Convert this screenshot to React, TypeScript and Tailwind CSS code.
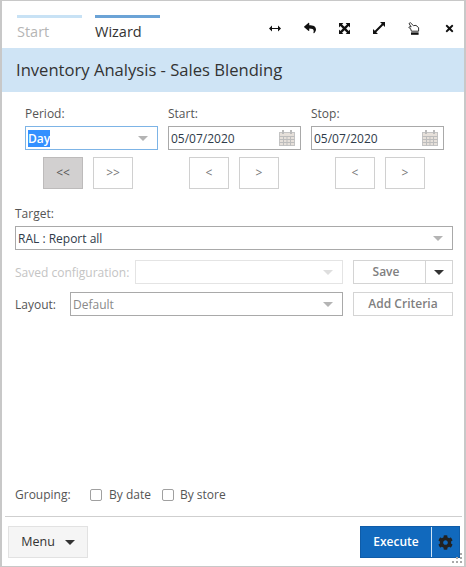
import { FaCog, FaReply, FaTimes } from 'react-icons/fa'

function Caret({ className = 'border-t-[#b4b4b4]' }: { className?: string }) {
  return <span className={`block h-0 w-0 border-x-[5px] border-t-[5px] border-x-transparent ${className}`} />
}

function Calendar() {
  return (
    <svg width="16" height="16" viewBox="0 0 16 16" className="shrink-0">
      <rect x="0.5" y="2.5" width="15" height="13" fill="#e6e0da" stroke="#c4c4c4" />
      <path d="M0.5 6.5H15.5M0.5 9.5H15.5M0.5 12.5H15.5M4.5 6.5V15.5M8 6.5V15.5M11.5 6.5V15.5" stroke="#bdbdbd" fill="none" />
      <rect x="3" y="0" width="2" height="4" fill="#bbb" />
      <rect x="11" y="0" width="2" height="4" fill="#bbb" />
    </svg>
  )
}

function WidthArrows() {
  return (
    <svg width="12" height="7" viewBox="0 0 12 7" fill="#111">
      <path d="M0 3.5 3 0.5V3H9V0.5L12 3.5 9 6.5V4H3V6.5Z" />
    </svg>
  )
}

function CrossArrows() {
  return (
    <svg width="11" height="11" viewBox="0 0 12 12" fill="#111">
      <path d="M0 0H4.8L3.3 1.5 6 4.2 8.7 1.5 7.2 0H12V4.8L10.5 3.3 7.8 6 10.5 8.7 12 7.2V12H7.2L8.7 10.5 6 7.8 3.3 10.5 4.8 12H0V7.2L1.5 8.7 4.2 6 1.5 3.3 0 4.8Z" />
    </svg>
  )
}

function DiagonalArrows() {
  return (
    <svg width="12" height="12" viewBox="0 0 12 12" fill="#111">
      <path d="M12 0V5L10.2 3.2 3.2 10.2 5 12H0V7L1.8 8.8 8.8 1.8 7 0Z" />
    </svg>
  )
}

function HandPointer() {
  return (
    <svg width="12" height="13" viewBox="0 0 12 13">
      <path
        d="M1 1.5 2.4 0.7 5.4 3.6 8 3.4 10.6 5.6 10.6 9.2 3.4 9.2 2.6 6.6 0.8 5.6 1.6 4.6 3.2 5Z"
        fill="#fff"
        stroke="#333"
        strokeWidth="1"
        strokeLinejoin="round"
      />
      <rect x="3" y="10.4" width="7.6" height="2.4" fill="#111" />
    </svg>
  )
}

function ResizeGrip() {
  return (
    <svg width="12" height="12" viewBox="0 0 12 12" fill="#a8a8a8" className="absolute bottom-[1px] right-[1px]">
      <rect x="9" y="0" width="2" height="2" />
      <rect x="9" y="4" width="2" height="2" />
      <rect x="5" y="4" width="2" height="2" />
      <rect x="9" y="8" width="2" height="2" />
      <rect x="5" y="8" width="2" height="2" />
      <rect x="1" y="8" width="2" height="2" />
    </svg>
  )
}

function StepButton({ label, active }: { label: string; active?: boolean }) {
  return (
    <div
      className={`flex h-[32px] w-[40px] items-center justify-center border text-[12px] ${
        active ? 'border-[#bdbbbb] bg-[#d2d0d0] text-[#555]' : 'border-[#d0d0d0] bg-white text-[#777]'
      }`}
    >
      {label}
    </div>
  )
}

function DateField({ label, stepClass }: { label: string; stepClass: string }) {
  return (
    <div className="flex w-[133px] flex-col">
      <div className="h-[20px] text-[12px] leading-[16px] text-[#555]">{label}</div>
      <div className="flex h-[24px] items-center justify-between border border-[#a9a9a9] pl-[2px] pr-[5px] text-[12px] text-[#2f3b4a]">
        <span className="pt-[1px]">05/07/2020</span>
        <Calendar />
      </div>
      <div className={`mt-[7px] flex justify-center gap-[10px] ${stepClass}`}>
        <StepButton label="<" />
        <StepButton label=">" />
      </div>
    </div>
  )
}

export default function App() {
  return (
    <div
      className="relative flex h-[567px] w-[466px] flex-col overflow-hidden border-x-2 border-y border-[#c8c8c8] bg-white text-[#333]"
      style={{ fontFamily: '"Open Sans", sans-serif' }}
    >
      <div className="flex h-[47px] shrink-0 pl-[15px] pr-[9px]">
        <div className="mt-[14px] w-[65px] border-t-[3px] border-[#c8e2f5] pt-[4px] text-[14.5px] leading-[20px] text-[#b5b5b5]">
          Start
        </div>
        <div className="ml-[13px] mt-[14px] w-[65px] border-t-[3px] border-[#6ba3d6] pt-[4px] text-[14.5px] leading-[20px] text-[#333]">
          Wizard
        </div>
        <div className="ml-auto mt-[20px] flex h-[14px] items-center text-[#111]">
          <WidthArrows />
          <FaReply size={12} className="ml-[23px]" />
          <span className="ml-[23px]"><CrossArrows /></span>
          <span className="ml-[23px]"><DiagonalArrows /></span>
          <span className="ml-[23px]"><HandPointer /></span>
          <FaTimes size={11} className="ml-[24px]" />
        </div>
      </div>

      <div className="flex h-[44px] shrink-0 items-center bg-[#cfe4f5] pl-[14px] text-[16.6px] font-medium text-[#333]">
        Inventory Analysis - Sales Blending
      </div>

      <div className="mt-[14px] flex gap-[10px] pl-[23px]">
        <div className="flex w-[133px] flex-col">
          <div className="h-[20px] text-[12px] leading-[16px] text-[#555]">Period:</div>
          <div className="flex h-[24px] items-center justify-between border border-[#7db4e6] pl-[2px] pr-[9px] text-[12px]">
            <span className="bg-[#3390ff] font-semibold leading-[17px] text-white">Day</span>
            <Caret />
          </div>
          <div className="mt-[7px] flex justify-center gap-[10px] pr-[7px]">
            <StepButton label="<<" active />
            <StepButton label=">>" />
          </div>
        </div>
        <DateField label="Start:" stepClass="pr-[1px]" />
        <DateField label="Stop:" stepClass="pl-[5px]" />
      </div>

      <div className="mt-[17px] pl-[13px] pr-[11px]">
        <div className="h-[20px] text-[12px] leading-[16px] text-[#555]">Target:</div>
        <div className="flex h-[24px] items-center justify-between border border-[#a9a9a9] pl-[2px] pr-[9px] text-[12px] text-[#2f3b4a]">
          <span className="pt-[1px]">RAL : Report all</span>
          <Caret />
        </div>

        <div className="mt-[10px] flex h-[24px] items-center">
          <span className="w-[120px] whitespace-nowrap pt-[1px] text-[12px] text-[#c4c4c4]">Saved configuration:</span>
          <div className="flex h-full w-[208px] items-center justify-end border border-[#e4e4e4] pr-[9px]">
            <Caret className="border-t-[#dedede]" />
          </div>
          <div className="ml-[10px] flex h-full w-[100px] border border-[#d4d4d4] text-[12px] font-semibold text-[#808080]">
            <div className="flex flex-1 items-center justify-center border-r border-[#d4d4d4] pr-[7px]">Save</div>
            <div className="flex w-[26px] items-center justify-center">
              <Caret className="border-t-[#333]" />
            </div>
          </div>
        </div>

        <div className="mt-[8px] flex h-[24px] items-center">
          <span className="w-[55px] pt-[1px] text-[12px] text-[#555]">Layout:</span>
          <div className="flex h-full w-[273px] items-center justify-between border border-[#a9a9a9] pl-[2px] pr-[9px] text-[12px] text-[#8a8a8a]">
            <span className="pt-[1px]">Default</span>
            <Caret />
          </div>
          <div className="ml-[10px] flex h-full w-[100px] items-center justify-center border border-[#d4d4d4] text-[12px] font-semibold text-[#808080]">
            Add Criteria
          </div>
        </div>
      </div>

      <div className="flex-1" />

      <div className="flex h-[16px] items-center pl-[13px] text-[12px] text-[#555]">
        <span className="w-[75px]">Grouping:</span>
        <span className="h-[12px] w-[12px] rounded-[2px] border border-[#a0a0a0]" />
        <span className="ml-[7px]">By date</span>
        <span className="ml-[11px] h-[12px] w-[12px] rounded-[2px] border border-[#a0a0a0]" />
        <span className="ml-[6px]">By store</span>
      </div>

      <div className="ml-[3px] mr-[2px] mt-[13px] flex h-[41px] items-start justify-between border-t border-[#cfcfcf] pl-[3px] pr-[2px] pt-[9px]">
        <div className="flex h-[32px] w-[80px] items-center justify-center gap-[10px] border border-[#e2e2e2] bg-[#f5f5f5] text-[12.5px] text-[#333]">
          Menu
          <Caret className="border-t-[#333]" />
        </div>
        <div className="flex h-[32px] w-[100px] items-center border border-[#0f5ca8] bg-[#1169bd] text-[12px] font-semibold text-white">
          <div className="flex flex-1 items-center justify-center">Execute</div>
          <div className="h-full w-px bg-[#cfe4f5]" />
          <div className="flex w-[27px] items-center justify-center text-[#222]">
            <FaCog size={15} />
          </div>
        </div>
      </div>
      <div className="h-[9px]" />
      <ResizeGrip />
    </div>
  )
}
